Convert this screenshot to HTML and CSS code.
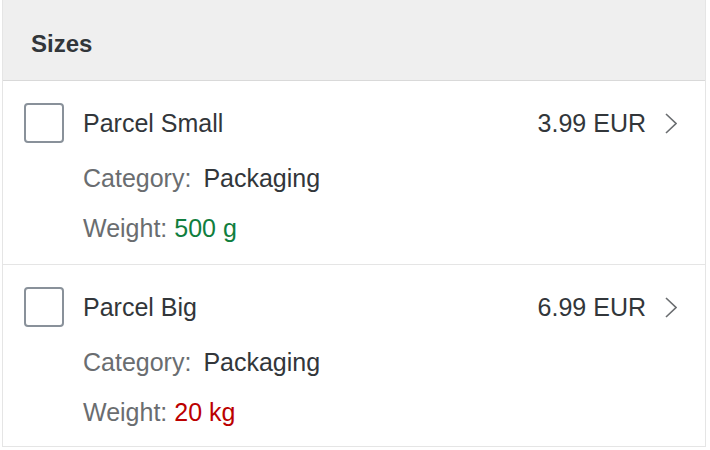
FILE: index.html
```html
<!DOCTYPE html>
<html>
<head>
<meta charset="utf-8">
<link rel="stylesheet" href="styles.css">
</head>
<body>
<div class="list">
  <div class="list-header">Sizes</div>
  <div class="item">
    <div class="item-top">
      <span class="checkbox"></span>
      <span class="title">Parcel Small</span>
      <span class="price">3.99 EUR</span>
      <svg class="chevron" viewBox="0 0 12 21" width="12" height="21"><path d="M1 1 L11 10.5 L1 20" fill="none" stroke="#6a6d70" stroke-width="1.6"/></svg>
    </div>
    <div class="attr"><span class="label">Category:</span><span class="value">Packaging</span></div>
    <div class="attr"><span class="label">Weight:</span> <span class="status good">500 g</span></div>
  </div>
  <div class="item">
    <div class="item-top">
      <span class="checkbox"></span>
      <span class="title">Parcel Big</span>
      <span class="price">6.99 EUR</span>
      <svg class="chevron" viewBox="0 0 12 21" width="12" height="21"><path d="M1 1 L11 10.5 L1 20" fill="none" stroke="#6a6d70" stroke-width="1.6"/></svg>
    </div>
    <div class="attr"><span class="label">Category:</span><span class="value">Packaging</span></div>
    <div class="attr"><span class="label">Weight:</span> <span class="status bad">20 kg</span></div>
  </div>
</div>
</body>
</html>
```

FILE: styles.css
```css
html, body {
  margin: 0;
  padding: 0;
  background: #ffffff;
}
body {
  font-family: "Liberation Sans", Arial, sans-serif;
  color: #32363a;
  font-size: 25px;
}
.list {
  margin: 0 4px 0 2px;
  border: 1px solid #e5e5e5;
  border-top: none;
}
.list-header {
  height: 81px;
  box-sizing: border-box;
  background: #efefef;
  border-bottom: 1px solid #d9d9d9;
  padding-left: 28px;
  font-weight: bold;
  font-size: 24px;
  line-height: 88px;
  color: #32363a;
}
.item {
  padding: 22px 28px 20px 21px;
  border-bottom: 1px solid #e5e5e5;
}
.item:last-child {
  border-bottom: none;
  padding-bottom: 18px;
}
.item-top {
  display: flex;
  align-items: center;
  height: 40px;
}
.checkbox {
  width: 40px;
  height: 40px;
  box-sizing: border-box;
  border: 2px solid #89919a;
  border-radius: 4px;
  background: #fff;
  flex: none;
}
.title {
  margin-left: 19px;
  line-height: 40px;
  flex: 1;
}
.price {
  line-height: 40px;
}
.chevron {
  margin-left: 19px;
  flex: none;
}
.attr {
  margin-left: 59px;
  line-height: 32px;
  margin-top: 18px;
}
.item-top + .attr {
  margin-top: 19px;
}
.label {
  color: #6a6d70;
}
.value {
  margin-left: 12px;
  color: #32363a;
}
.good {
  color: #107e3e;
}
.bad {
  color: #bb0000;
}
```
